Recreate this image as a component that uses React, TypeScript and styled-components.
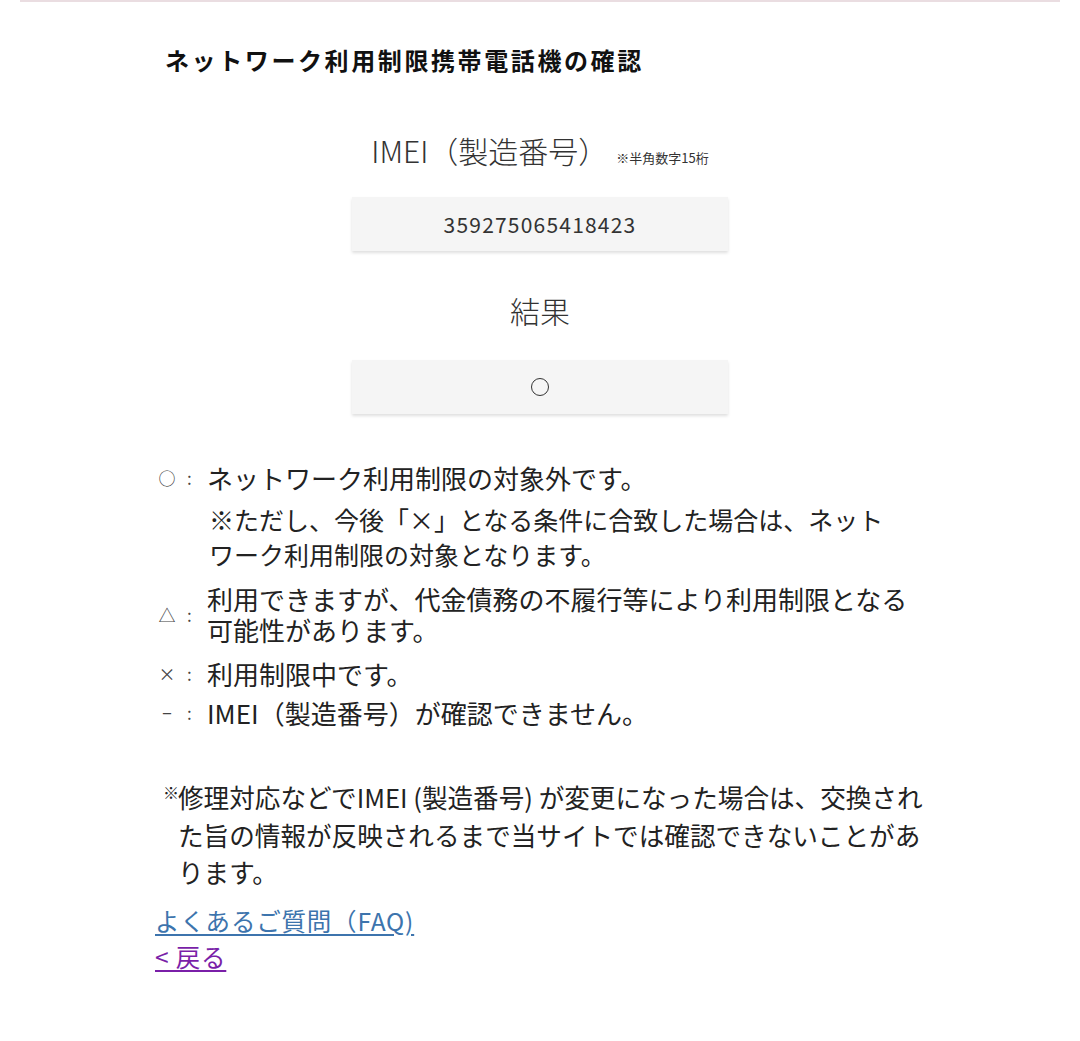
import React from "react";
import styled, { createGlobalStyle } from "styled-components";

const Global = createGlobalStyle`
  html, body { margin: 0; padding: 0; background: #fff; }
  body { font-family: "Noto Sans CJK JP", "Noto Sans", sans-serif; color: #222; }
`;

const TopLine = styled.div`
  margin: 0 20px;
  border-top: 2px solid #eadde1;
`;

const Container = styled.div`
  width: 770px;
  margin: 0 auto;
  padding-bottom: 60px;
`;

const Title = styled.h1`
  margin: 40px 0 0;
  padding-left: 10px;
  font-size: 24px;
  line-height: 36px;
  font-weight: 700;
  letter-spacing: 2.6px;
  color: #111;
`;

const Label = styled.div<{ $mt: number }>`
  margin-top: ${(p) => p.$mt}px;
  height: 40px;
  display: flex;
  align-items: baseline;
  justify-content: center;
  font-size: 30px;
  line-height: 40px;
  font-weight: 300;
  color: #333;
`;

const Small = styled.span`
  font-size: 13px;
  line-height: 1;
  margin-left: 8px;
  font-weight: 400;
`;

const Field = styled.div<{ $mt: number }>`
  width: 376px;
  height: 54px;
  margin: ${(p) => p.$mt}px auto 0;
  background: #f5f5f5;
  box-shadow: 0 2px 3px rgba(0, 0, 0, 0.13);
  display: flex;
  align-items: center;
  justify-content: center;
  font-size: 21px;
  letter-spacing: 1.2px;
  color: #333;
`;

const Circle = styled.span`
  display: inline-block;
  width: 18px;
  height: 18px;
  border: 1.3px solid #333;
  border-radius: 50%;
  box-sizing: border-box;
`;

const Legend = styled.div`
  margin-top: 48px;
  display: flex;
  flex-direction: column;
`;

const Row = styled.div<{ $mt?: number }>`
  display: flex;
  align-items: center;
  margin-top: ${(p) => p.$mt ?? 0}px;
`;

const Sym = styled.div`
  width: 52px;
  flex: none;
  display: flex;
  align-items: center;
  box-sizing: border-box;
  font-size: 17px;
  color: #444;
`;

const SymMark = styled.span`
  width: 24px;
  display: inline-flex;
  justify-content: center;
`;

const Colon = styled.span`
  margin-left: 8px;
`;

const Text = styled.div`
  flex: 1;
  font-size: 26px;
  line-height: 31px;
`;

const SubNote = styled.div`
  margin: 9px 0 0 54px;
  padding-right: 38px;
  font-size: 25px;
  line-height: 35px;
`;

const Note = styled.p`
  margin: 50px 0 0;
  padding-left: 23px;
  position: relative;
  font-size: 25.6px;
  line-height: 37.5px;
`;

const Kome = styled.span`
  position: absolute;
  left: 8px;
  top: -4px;
  font-size: 16px;
`;

const Links = styled.div`
  margin-top: 12px;
  display: flex;
  flex-direction: column;
  align-items: flex-start;
  font-size: 24.5px;
  line-height: 36px;
  letter-spacing: 0.8px;
`;

const Link = styled.a<{ $color: string }>`
  color: ${(p) => p.$color};
  text-decoration: underline;
  text-underline-offset: 3px;
`;

export default function App() {
  return (
    <>
      <Global />
      <TopLine />
      <Container>
        <Title>ネットワーク利用制限携帯電話機の確認</Title>
        <Label $mt={52}>
          IMEI（製造番号）<Small>※半角数字15桁</Small>
        </Label>
        <Field $mt={27}>359275065418423</Field>
        <Label $mt={39}>結果</Label>
        <Field $mt={30}>
          <Circle />
        </Field>
        <Legend>
          <Row>
            <Sym>
              <SymMark>○</SymMark>
              <Colon>:</Colon>
            </Sym>
            <Text>ネットワーク利用制限の対象外です。</Text>
          </Row>
          <SubNote>
            ※ただし、今後「×」となる条件に合致した場合は、ネットワーク利用制限の対象となります。
          </SubNote>
          <Row $mt={11}>
            <Sym>
              <SymMark>△</SymMark>
              <Colon>:</Colon>
            </Sym>
            <Text>利用できますが、代金債務の不履行等により利用制限となる可能性があります。</Text>
          </Row>
          <Row $mt={13}>
            <Sym>
              <SymMark>×</SymMark>
              <Colon>:</Colon>
            </Sym>
            <Text>利用制限中です。</Text>
          </Row>
          <Row $mt={8}>
            <Sym>
              <SymMark>−</SymMark>
              <Colon>:</Colon>
            </Sym>
            <Text>IMEI（製造番号）が確認できません。</Text>
          </Row>
        </Legend>
        <Note>
          <Kome>※</Kome>
          修理対応などでIMEI (製造番号) が変更になった場合は、交換された旨の情報が反映されるまで当サイトでは確認できないことがあります。
        </Note>
        <Links>
          <Link $color="#3d74ad" href="#">よくあるご質問（FAQ)</Link>
          <Link $color="#7a1fa8" href="#">&lt; 戻る</Link>
        </Links>
      </Container>
    </>
  );
}
